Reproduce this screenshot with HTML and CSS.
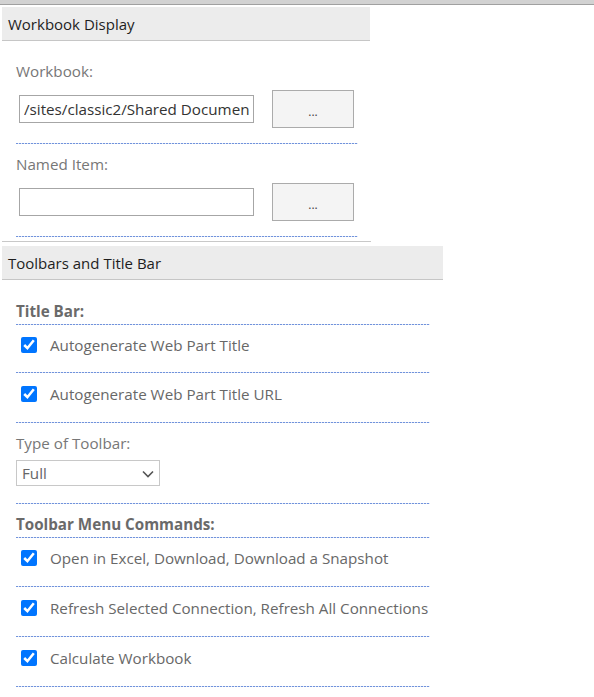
FILE: index.html
```html
<!DOCTYPE html>
<html>
<head>
<meta charset="utf-8">
<link rel="stylesheet" href="styles.css">
</head>
<body>
<div class="topbar"></div>
<div class="section s1">
  <div class="hdr">Workbook Display</div>
  <div class="body">
    <div class="field dots">
      <div class="lbl">Workbook:</div>
      <div class="row">
        <input class="txt" type="text" value="/sites/classic2/Shared Documents/Book.xlsx">
        <button class="btn" type="button">...</button>
      </div>
    </div>
    <div class="field dots">
      <div class="lbl">Named Item:</div>
      <div class="row">
        <input class="txt" type="text" value="">
        <button class="btn" type="button">...</button>
      </div>
    </div>
  </div>
</div>
<div class="section s2">
  <div class="hdr">Toolbars and Title Bar</div>
  <div class="body">
    <div class="group-title dots">Title Bar:</div>
    <label class="check dots first-tb"><input type="checkbox" checked><span>Autogenerate Web Part Title</span></label>
    <label class="check dots"><input type="checkbox" checked><span>Autogenerate Web Part Title URL</span></label>
    <div class="selfield dots">
      <div class="lbl">Type of Toolbar:</div>
      <div class="select">
        <span>Full</span>
        <svg class="chev" width="12" height="8" viewBox="0 0 12 8"><path d="M1 1.5 L6 6.5 L11 1.5" fill="none" stroke="#555" stroke-width="1.6"/></svg>
      </div>
    </div>
    <div class="group-title dots">Toolbar Menu Commands:</div>
    <label class="check dots"><input type="checkbox" checked><span>Open in Excel, Download, Download a Snapshot</span></label>
    <label class="check dots"><input type="checkbox" checked><span>Refresh Selected Connection, Refresh All Connections</span></label>
    <label class="check dots"><input type="checkbox" checked><span>Calculate Workbook</span></label>
  </div>
</div>
</body>
</html>
```
FILE: styles.css
```css
html, body {
  margin: 0;
  padding: 0;
  background: #fff;
}
body {
  font-family: "Open Sans", "Noto Sans", sans-serif;
  font-size: 15.2px;
  color: #686868;
  width: 594px;
  overflow: hidden;
}
.topbar {
  height: 4px;
  background: #d2d2d2;
  border-bottom: 1px solid #a0a0a0;
  margin-bottom: 2px;
}
.section {
  margin-left: 2px;
}
.s1 {
  width: 369px;
  border-bottom: 1px solid #c8c8c8;
  padding-bottom: 4px;
}
.s2 {
  width: 441px;
  margin-top: 4px;
}
.hdr {
  height: 33px;
  line-height: 34px;
  background: #ececec;
  border-bottom: 1px solid #c6c6c6;
  padding-left: 6px;
  color: #1e1e1e;
  font-size: 15px;
}
.s1 .hdr { width: 362px; }
.body {
  padding-left: 14px;
}
.s1 .body {
  padding-top: 20px;
}
/* dotted separator: 2px dot, 1px gap */
.dots {
  background-image: repeating-linear-gradient(90deg, #7193dc 0 2px, #e2e8f6 2px 3px);
  background-size: 100% 1px;
  background-position: left bottom;
  background-repeat: no-repeat;
}
.field {
  width: 342px;
  padding-bottom: 16px;
  margin-bottom: 10px;
}
.field:last-child { margin-bottom: 0; }
.lbl {
  line-height: 20px;
  color: #777;
}
.row {
  display: flex;
  align-items: center;
  margin-top: 9px;
}
.txt {
  box-sizing: border-box;
  margin: 0 0 0 3px;
  width: 235px;
  height: 28px;
  padding: 0 4px;
  border: 1px solid #a6a6a6;
  border-radius: 0;
  outline: none;
  font-family: inherit;
  font-size: 15.2px;
  color: #333;
  background: #fff;
}
.btn {
  box-sizing: border-box;
  margin: 0 0 0 18px;
  width: 82px;
  height: 38px;
  padding: 4px 0 0 0;
  background: #f4f4f4;
  border: 1px solid #ababab;
  border-radius: 0;
  text-align: center;
  color: #444;
  font-family: inherit;
  font-size: 12px;
}
.s2 .body {
  width: 414px;
  padding-top: 21px;
}
.group-title {
  font-weight: bold;
  line-height: 20px;
  padding-bottom: 4px;
  color: #6a6a6a;
}
.check {
  display: flex;
  align-items: center;
  padding: 11px 0 19px 0;
  line-height: 20px;
  white-space: nowrap;
}
.group-title + .check {
  padding-top: 10px;
}
.check.first-tb {
  padding-bottom: 18px;
}
.check input {
  width: 16px;
  height: 16px;
  margin: 0 13px 0 5px;
  accent-color: #0075ff;
}
.selfield {
  padding-top: 10px;
  padding-bottom: 18px;
  margin-bottom: 10px;
}
.select {
  position: relative;
  margin-top: 7px;
  width: 142px;
  height: 24px;
  line-height: 24px;
  border: 1px solid #c8c8c8;
}
.select span {
  margin-left: 5px;
  color: #666;
}
.chev {
  position: absolute;
  right: 5px;
  top: 9px;
}
```
